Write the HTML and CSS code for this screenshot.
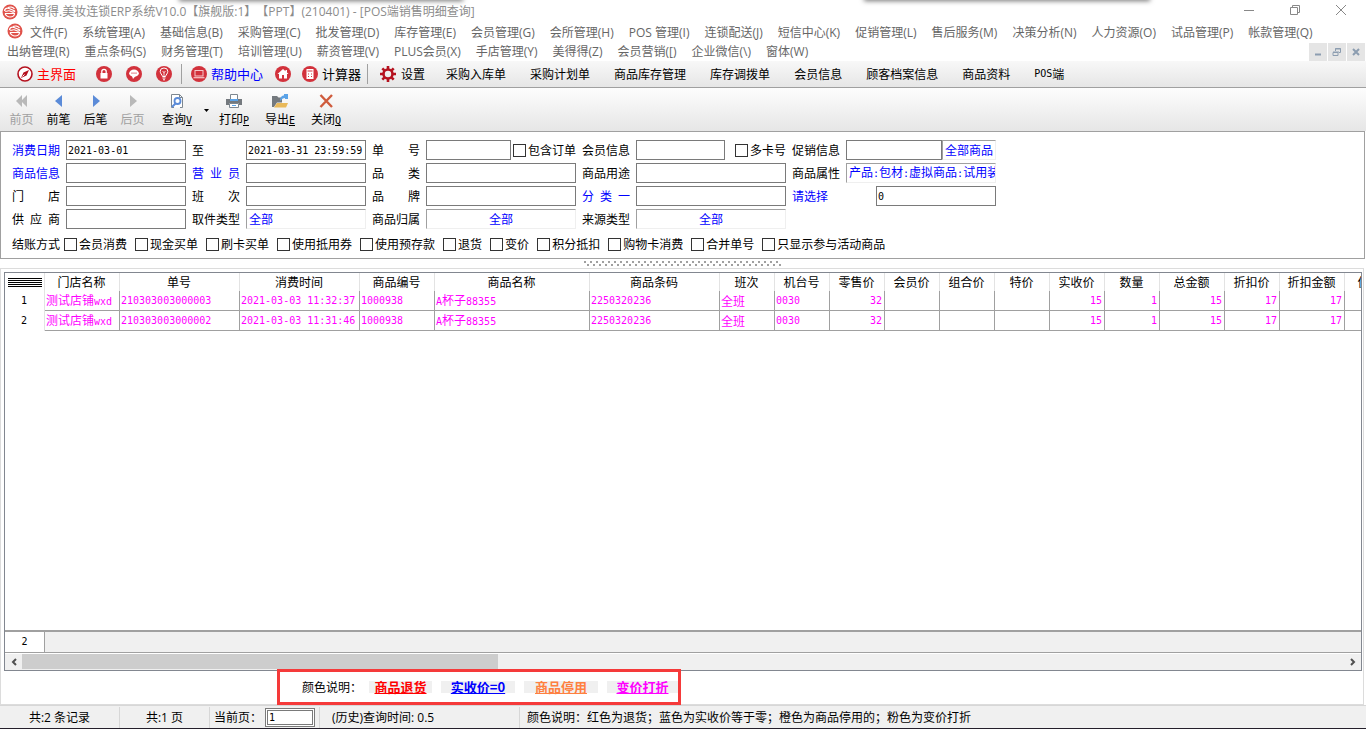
FILE: index.html
```html
<!DOCTYPE html>
<html lang="zh-CN">
<head>
    <meta charset="UTF-8">
    <meta name="viewport" content="width=device-width, initial-scale=1.0">
    <title>POS端销售明细查询</title>
    <link rel="stylesheet" href="styles.css">
</head>
<body>
    <svg class="defs" width="0" height="0">
        <symbol id="logo" viewBox="0 0 16 16">
            <circle cx="8" cy="8" r="7.5" fill="#e0524a"/>
            <path d="M2.500 7c0-2 2-3.500 4.500-2.500l6 2.500M3 7c2 1 3-1 5 0s4 2 5 0M3 9.500h9.500c0 2-2 3.500-4.500 3.500s-4-1.500-5-3.500M6 3.500c2-1 5-.5 6.500 1.500" fill="none" stroke="#fff" stroke-width="1.200"/>
        </symbol>
    </svg>
    <div class="topShadow shadowLeft"></div>
    <div class="topShadow shadowRight"></div>

    <header class="titleBar">
        <svg class="icon16"><use href="#logo"/></svg>
        <span class="titleText">美得得.美妆连锁ERP系统V10.0【旗舰版:1】【PPT】(210401) - [POS端销售明细查询]</span>
        <div class="windowButtons">
            <button type="button" aria-label="最小化"><svg width="12" height="12"><path d="M1 6.500h10" stroke="#888" fill="none"/></svg></button>
            <button type="button" aria-label="还原"><svg width="12" height="12"><path d="M1.500 3.500h7v7h-7zM3.500 3.500v-2h7v7h-2" stroke="#888" fill="none"/></svg></button>
            <button type="button" aria-label="关闭"><svg width="12" height="12"><path d="M1 1l10 10M11 1L1 11" stroke="#888" fill="none"/></svg></button>
        </div>
    </header>

    <div class="menuBar">
        <nav class="menu">
            <svg class="icon16 menuLogo"><use href="#logo"/></svg>
            <a href="#">文件(F)</a><a href="#">系统管理(A)</a><a href="#">基础信息(B)</a><a href="#">采购管理(C)</a><a href="#">批发管理(D)</a><a href="#">库存管理(E)</a><a href="#">会员管理(G)</a><a href="#">会所管理(H)</a><a href="#">POS 管理(I)</a><a href="#">连锁配送(J)</a><a href="#">短信中心(K)</a><a href="#">促销管理(L)</a><a href="#">售后服务(M)</a><a href="#">决策分析(N)</a><a href="#">人力资源(O)</a><a href="#">试品管理(P)</a><a href="#">帐款管理(Q)</a><a href="#">出纳管理(R)</a><a href="#">重点条码(S)</a><a href="#">财务管理(T)</a><a href="#">培训管理(U)</a><a href="#">薪资管理(V)</a><a href="#">PLUS会员(X)</a><a href="#">手店管理(Y)</a><a href="#">美得得(Z)</a><a href="#">会员营销([)</a><a href="#">企业微信(\)</a><a href="#">窗体(W)</a>
        </nav>
        <div class="mdiButtons">
            <button type="button" aria-label="最小化子窗口"><svg width="10" height="10"><path d="M2 7.500h6" stroke="#8c9db0" stroke-width="2"/></svg></button>
            <button type="button" aria-label="还原子窗口"><svg width="10" height="10"><path d="M1 5.500h5v3h-5zM1 5h6M3.500 4V1.500h5v4H7M3 2h6" stroke="#8c9db0" fill="none"/></svg></button>
            <button type="button" aria-label="关闭子窗口"><svg width="10" height="10"><path d="M2 2l6 6M8 2L2 8" stroke="#8c9db0" stroke-width="2"/></svg></button>
        </div>
    </div>

    <nav class="shortcuts">
        <a href="#" class="big red">
            <svg class="icon16" viewBox="0 0 16 16"><circle cx="8" cy="8" r="7" fill="#fff" stroke="#b5121f" stroke-width="1.600"/><path d="M12 4L9.500 9.500 4 12l2.500-5.500z" fill="#b5121f"/><path d="M7.500 8.500L5.500 10.500" stroke="#fff"/></svg>
            主界面
        </a>
        <div class="roundIcons">
            <a href="#" aria-label="锁定"><svg class="icon16" viewBox="0 0 16 16"><circle cx="8" cy="8" r="8" fill="#d2323c"/><rect x="4.500" y="7" width="7" height="5.500" fill="#fff"/><path d="M5.800 7V5.500a2.200 2.200 0 0 1 4.400 0V7" fill="none" stroke="#fff" stroke-width="1.300"/></svg></a>
            <a href="#" aria-label="消息"><svg class="icon16" viewBox="0 0 16 16"><circle cx="8" cy="8" r="8" fill="#d2323c"/><ellipse cx="8" cy="7.200" rx="4.800" ry="3.600" fill="#fff"/><path d="M6 10l1 3 2.500-3z" fill="#fff"/><path d="M5.500 7.200h1M7.500 7.200h1M9.500 7.200h1" stroke="#d2323c" stroke-width="1.200"/></svg></a>
            <a href="#" aria-label="提示"><svg class="icon16" viewBox="0 0 16 16"><circle cx="8" cy="8" r="8" fill="#d2323c"/><path d="M6.500 10.500C6 8.500 4.200 7.500 4.200 5.300a3.800 3.300 0 0 1 7.600 0C11.800 7.500 10 8.500 9.500 10.500z" fill="none" stroke="#fff"/><path d="M8 10V6M6.500 5L8 6.500 9.500 5" fill="none" stroke="#fff" stroke-width=".8"/><path d="M6.500 12h3M7 13.800h2" stroke="#fff"/></svg></a>
        </div>
        <i class="sep"></i>
        <a href="#" class="big blue help">
            <svg class="icon16" viewBox="0 0 16 16"><circle cx="8" cy="8" r="8" fill="#d2323c"/><rect x="4" y="4.500" width="8" height="5.500" fill="none" stroke="#f6c8ca"/><path d="M2.500 11.700h11" stroke="#f6c8ca" stroke-width="1.200"/></svg>
            帮助中心
        </a>
        <a href="#" aria-label="主页" class="home"><svg class="icon16" viewBox="0 0 16 16"><circle cx="8" cy="8" r="8" fill="#d2323c"/><path d="M8 3L2.500 8H4v4.500h3V9h2v3.500h3V8h1.500L12 6.500V4h-1.500v1.200z" fill="#fff"/></svg></a>
        <a href="#" class="big">
            <svg class="icon16" viewBox="0 0 16 16"><circle cx="8" cy="8" r="8" fill="#d2323c"/><rect x="4.500" y="3" width="7" height="10" fill="#fff"/><path d="M5.500 5h5" stroke="#d2323c"/><path d="M6 8h1M9 8h1M6 10.500h1M9 10.500h1" stroke="#d2323c" stroke-width="1.200"/></svg>
            计算器
        </a>
        <i class="sep"></i>
        <a href="#" class="setting">
            <svg class="icon16" viewBox="0 0 16 16"><circle cx="8" cy="8" r="4.500" fill="none" stroke="#b5121f" stroke-width="2.600"/><path d="M8 0v3M8 13v3M0 8h3M13 8h3M2.300 2.300l2 2M11.700 11.700l2 2M2.300 13.700l2-2M11.700 4.300l2-2" stroke="#b5121f" stroke-width="2.600"/></svg>
            设置
        </a>
        <div class="quickLinks">
            <a href="#">采购入库单</a>
            <a href="#">采购计划单</a>
            <a href="#">商品库存管理</a>
            <a href="#">库存调拨单</a>
            <a href="#">会员信息</a>
            <a href="#">顾客档案信息</a>
            <a href="#">商品资料</a>
            <a href="#"><span class="n">POS</span>端</a>
        </div>
    </nav>

    <div class="toolbar">
        <button type="button" disabled><svg class="icon16"><path d="M8 2v12L2 8zM13 2v12L7 8z" fill="#b9b9b9"/></svg>前页</button>
        <button type="button"><svg class="icon16"><path d="M11 2v12L4 8z" fill="#5b8bd8"/></svg>前笔</button>
        <button type="button"><svg class="icon16"><path d="M5 2v12l7-6z" fill="#5b8bd8"/></svg>后笔</button>
        <button type="button" disabled><svg class="icon16"><path d="M5 2v12l7-6z" fill="#b9b9b9"/></svg>后页</button>
        <button type="button" class="wide"><svg class="icon16"><path d="M5 14.500H2.500v-13h8l3 3v10H11M10.500 1.500v3h3" fill="#fff" stroke="#7d8790"/><circle cx="8.500" cy="8" r="3" fill="#fff" stroke="#5b8bd8" stroke-width="1.800"/><path d="M6.500 10.500L3 14" stroke="#5b8bd8" stroke-width="2"/></svg><span>查询<u class="n">V</u></span></button>
        <button type="button" class="drop" aria-label="查询选项"><svg width="5" height="3"><path d="M0 0h5L2.500 3z"/></svg></button>
        <button type="button" class="medium"><svg class="icon16"><path d="M4.500 6V1.500h7V6" fill="#fff" stroke="#7d8790"/><path d="M0 6h4v2h8V6h4v6h-3v-2H3v2H0z" fill="#74797e"/><path d="M4 6h8v2H4z" fill="#5ba3e8"/><path d="M3.500 10.500h9v4h-9z" fill="#fff" stroke="#7d8790"/><path d="M6 12.500h4" stroke="#5ba3e8"/></svg><span>打印<u class="n">P</u></span></button>
        <button type="button" class="medium"><svg class="icon16"><path d="M0 3h5l1.500 1.500H10v5H5L2 14H0z" fill="#74797e"/><path d="M2 14.500l3-4.500h11l-2 4.500z" fill="#e9b95a"/><path d="M8 8c0-4 2-5.500 4-5.500V1h4v5h-3V5c-2 0-3 1-5 3z" fill="#5ba3e8"/></svg><span>导出<u class="n">E</u></span></button>
        <button type="button" class="medium"><svg class="icon16"><path d="M2.500 2l11.500 12M14 2L2.500 14" stroke="#cf5b3c" stroke-width="2.400"/></svg><span>关闭<u class="n">Q</u></span></button>
    </div>

    <form class="filter">
        <div class="fields">
            <div class="field"><label class="blue" for="dateFrom">消费日期</label><input id="dateFrom" value="2021-03-01"></div>
            <div class="field"><label class="left" for="dateTo">至</label><input id="dateTo" value="2021-03-31 23:59:59"></div>
            <div class="field"><label for="billNo">单 号</label><input id="billNo"><div class="check"><input type="checkbox" id="withOrder"><label for="withOrder">包含订单</label></div></div>
            <div class="field"><label for="member">会员信息</label><input id="member"><div class="check multi"><input type="checkbox" id="multiCard"><label for="multiCard">多卡号</label></div></div>
            <div class="field"><label for="promo">促销信息</label><input id="promo"><button type="button" class="pick">全部商品</button></div>

            <div class="field"><label class="blue" for="goods">商品信息</label><input id="goods"></div>
            <div class="field"><label class="blue" for="clerk">营 业 员</label><input id="clerk"></div>
            <div class="field"><label for="kind">品 类</label><input id="kind"></div>
            <div class="field"><label for="usage">商品用途</label><input id="usage"></div>
            <div class="field"><label for="attr">商品属性</label><button type="button" id="attr" class="pick fill">产品<span class="n">:</span>包材<span class="n">:</span>虚拟商品<span class="n">:</span>试用装</button></div>

            <div class="field"><label for="shop">门 店</label><input id="shop"></div>
            <div class="field"><label for="shift">班 次</label><input id="shift"></div>
            <div class="field"><label for="brand">品 牌</label><input id="brand"></div>
            <div class="field"><label class="blue" for="cat1">分 类 一</label><input id="cat1"></div>
            <div class="field choose"><label class="blue left" for="choose">请选择</label><input id="choose" value="0"></div>

            <div class="field"><label for="supplier">供 应 商</label><input id="supplier"></div>
            <div class="field"><label for="pickup">取件类型</label><button type="button" id="pickup" class="pick fill">全部</button></div>
            <div class="field"><label for="owner">商品归属</label><button type="button" id="owner" class="pick fill center">全部</button></div>
            <div class="field"><label for="source">来源类型</label><button type="button" id="source" class="pick fill center">全部</button></div>
        </div>
        <div class="payRow">
            <span>结账方式</span>
            <div class="check"><input type="checkbox" id="p1"><label for="p1">会员消费</label></div>
            <div class="check"><input type="checkbox" id="p2"><label for="p2">现金买单</label></div>
            <div class="check"><input type="checkbox" id="p3"><label for="p3">刷卡买单</label></div>
            <div class="check"><input type="checkbox" id="p4"><label for="p4">使用抵用券</label></div>
            <div class="check"><input type="checkbox" id="p5"><label for="p5">使用预存款</label></div>
            <div class="check"><input type="checkbox" id="p6"><label for="p6">退货</label></div>
            <div class="check"><input type="checkbox" id="p7"><label for="p7">变价</label></div>
            <div class="check"><input type="checkbox" id="p8"><label for="p8">积分抵扣</label></div>
            <div class="check"><input type="checkbox" id="p9"><label for="p9">购物卡消费</label></div>
            <div class="check"><input type="checkbox" id="p10"><label for="p10">合并单号</label></div>
            <div class="check"><input type="checkbox" id="p11"><label for="p11">只显示参与活动商品</label></div>
        </div>
    </form>
    <div class="splitter"><i></i></div>

    <main class="frame">
        <div class="grid">
            <div class="gridBody">
                <table>
                    <colgroup>
                        <col class="w40"><col class="w75"><col class="w120"><col class="w120"><col class="w75"><col class="w155"><col class="w130">
                        <col class="w55"><col class="w55"><col class="w55"><col class="w55"><col class="w55"><col class="w55"><col class="w55"><col class="w55">
                        <col class="w65"><col class="w55"><col class="w65"><col class="w75">
                    </colgroup>
                    <thead>
                        <tr>
                            <th><div class="lines"></div></th><th>门店名称</th><th>单号</th><th>消费时间</th><th>商品编号</th><th>商品名称</th><th>商品条码</th><th>班次</th><th>机台号</th><th>零售价</th><th>会员价</th><th>组合价</th><th>特价</th><th>实收价</th><th>数量</th><th>总金额</th><th>折扣价</th><th>折扣金额</th><th>优惠金额</th>
                        </tr>
                    </thead>
                    <tbody>
                        <tr>
                            <th class="n">1</th><td>测试店铺<span class="n">wxd</span></td><td class="n">210303003000003</td><td class="n">2021-03-03 11:32:37</td><td class="n">1000938</td><td><span class="n">A</span>杯子<span class="n">88355</span></td><td class="n">2250320236</td><td>全班</td><td class="n">0030</td><td class="n num">32</td><td></td><td></td><td></td><td class="n num">15</td><td class="n num">1</td><td class="n num">15</td><td class="n num">17</td><td class="n num">17</td><td></td>
                        </tr>
                        <tr>
                            <th class="n">2</th><td>测试店铺<span class="n">wxd</span></td><td class="n">210303003000002</td><td class="n">2021-03-03 11:31:46</td><td class="n">1000938</td><td><span class="n">A</span>杯子<span class="n">88355</span></td><td class="n">2250320236</td><td>全班</td><td class="n">0030</td><td class="n num">32</td><td></td><td></td><td></td><td class="n num">15</td><td class="n num">1</td><td class="n num">15</td><td class="n num">17</td><td class="n num">17</td><td></td>
                        </tr>
                    </tbody>
                </table>
            </div>
            <div class="totalRow"><span class="n">2</span></div>
            <div class="scrollBar">
                <button type="button" aria-label="向左"><svg width="8" height="8"><path d="M6 1L3 4l3 3" fill="none" stroke="#505050" stroke-width="2"/></svg></button>
                <div class="track"><div class="thumb"></div></div>
                <button type="button" aria-label="向右"><svg width="8" height="8"><path d="M2 1l3 3-3 3" fill="none" stroke="#505050" stroke-width="2"/></svg></button>
            </div>
        </div>
        <div class="legend">
            <span class="legendTitle">颜色说明：</span>
            <a href="#" class="tag tagRed">商品退货</a>
            <a href="#" class="tag tagBlue">实收价=0</a>
            <a href="#" class="tag tagOrange">商品停用</a>
            <a href="#" class="tag tagPink">变价打折</a>
        </div>
    </main>

    <footer class="status">
        <div class="cell records">共:2 条记录</div>
        <div class="cell pages">共:1 页</div>
        <div class="cell current"><label for="page">当前页：</label><input id="page" value="1"></div>
        <div class="cell time">(历史)查询时间: 0.5</div>
        <div class="cell note">颜色说明：红色为退货；蓝色为实收价等于零；橙色为商品停用的；粉色为变价打折</div>
    </footer>
</body>
</html>
```
FILE: styles.css
```css
* {
    box-sizing: border-box;
}
html, body {
    margin: 0;
    padding: 0;
}
body {
    font-family: "Open Sans", "Noto Sans CJK SC", sans-serif;
    font-size: 12px;
    line-height: 16px;
    text-spacing-trim: space-all;
    height: 100vh;
    display: flex;
    flex-direction: column;
    background-color: #fff;
    color: #000;
    overflow: hidden;
    border-bottom: 1px solid #241f2b;
}
a {
    color: inherit;
    text-decoration: none;
}
button, input {
    font: inherit;
    color: inherit;
    margin: 0;
    padding: 0;
    border: 0;
    border-radius: 0;
    background: none;
}
.defs {
    position: absolute;
}
.icon16 {
    width: 16px;
    height: 16px;
    flex: none;
    display: block;
}
.blue {
    color: #0000ff;
}
.red {
    color: #ff0000;
}
/* half-width latin next to 12px chinese */
.n {
    font-family: "DejaVu Sans Mono", monospace;
    font-size: 10px;
}

/* shadows of the panels docked above the window */
.topShadow {
    position: absolute;
    top: -4px;
    height: 4px;
    box-shadow: 0 0 5px 1px #777;
}
.shadowLeft {
    left: 13.2%;
    width: 20.6%;
}
.shadowRight {
    left: 63.3%;
    width: 20.8%;
}

.titleBar {
    display: flex;
    align-items: center;
    height: 23px;
    padding: 0 2px;
    gap: 5px;
    color: #8c8c8c;
    flex: none;
}
.titleText {
    flex: 1;
    white-space: nowrap;
}
.windowButtons {
    display: flex;
    align-self: flex-start;
}
.windowButtons button {
    width: 46px;
    height: 20px;
    display: flex;
    align-items: center;
    justify-content: center;
}

.menuBar {
    display: flex;
    position: relative;
    flex: none;
    color: #666;
}
.menu {
    flex: 1;
    display: flex;
    flex-wrap: wrap;
}
.menu a {
    padding: 0 8px 0 7px;
    line-height: 19px;
    white-space: nowrap;
}
.menuLogo {
    margin-left: 7px;
}
.mdiButtons {
    position: absolute;
    right: 1px;
    bottom: 0;
    display: flex;
    gap: 1px;
}
.mdiButtons button {
    width: 18px;
    height: 18px;
    background-color: #e5e5e5;
    display: flex;
    align-items: center;
    justify-content: center;
}

.shortcuts {
    flex: none;
    display: flex;
    align-items: center;
    height: 27px;
    padding-left: 17px;
    background: linear-gradient(#f8f8f8, #e6e6e6);
    border-bottom: 1px solid #a0a0a0;
    white-space: nowrap;
    font-family: "Noto Sans CJK SC", sans-serif;
}
.shortcuts a {
    display: flex;
    align-items: center;
    gap: 4px;
}
.shortcuts .big {
    font-size: 13px;
}
.roundIcons {
    display: flex;
    gap: 14px;
    margin: 0 9px 0 20px;
}
.sep {
    width: 1px;
    height: 20px;
    background-color: #a0a0a0;
}
.shortcuts .help {
    margin-left: 9px;
}
.shortcuts .home {
    margin: 0 11px 0 12px;
}
.shortcuts .home + .big {
    margin-right: 6px;
}
.shortcuts .setting {
    margin: 0 21px 0 12px;
    gap: 5px;
}
.quickLinks {
    display: flex;
    gap: 24px;
}
.quickLinks a {
    gap: 0;
}

.toolbar {
    flex: none;
    display: flex;
    height: 43px;
    padding: 5px 0 0 3px;
    background: linear-gradient(#fdfdfd, #e6e6e6);
    font-family: "Noto Sans CJK SC", sans-serif;
}
.toolbar button {
    width: 37px;
    height: 35px;
    display: flex;
    flex-direction: column;
    align-items: center;
    gap: 2px;
}
.toolbar button:disabled {
    color: #a0a0a0;
}
.toolbar .wide {
    width: 52px;
}
.toolbar .drop {
    width: 6px;
    margin-right: 2px;
    justify-content: center;
}
.toolbar .medium {
    width: 46px;
}

.filter {
    flex: none;
    border: 1px solid #a0a0a0;
    padding: 8px 0 6px 11px;
    margin-right: 1px;
    font-family: "Noto Sans CJK SC", sans-serif;
}
.fields {
    display: grid;
    grid-template-columns: 174px 174px 204px 204px 204px;
    grid-auto-rows: 20px;
    gap: 3px 6px;
}
.field {
    display: flex;
    align-items: center;
    min-width: 0;
}
.field > label {
    width: 48px;
    margin-right: 6px;
    flex: none;
    text-align-last: justify;
    white-space: nowrap;
}
.field > .left {
    text-align-last: left;
}
.field > input {
    flex: 1;
    min-width: 0;
    height: 20px;
    border: 1px solid #7a7a7a;
    background-color: #fff;
    padding: 0 1px;
    font-family: "DejaVu Sans Mono", monospace;
    font-size: 10px;
}
.choose > input {
    margin-left: 30px;
}
.check {
    display: flex;
    align-items: center;
    gap: 2px;
    white-space: nowrap;
}
.check input {
    appearance: none;
    width: 13px;
    height: 13px;
    border: 1px solid #333;
    background-color: #fff;
}
.field .check {
    margin-left: 2px;
}
.field .multi {
    margin-left: 10px;
}
.pick {
    height: 20px;
    border: 1px solid #efefef;
    border-top-color: #a0a0a0;
    border-left-color: #a0a0a0;
    color: #0000ff;
    padding: 0 2px;
    overflow: hidden;
    white-space: nowrap;
    text-align: left;
}
.pick.fill {
    flex: 1;
    min-width: 0;
}
.pick.center {
    text-align: center;
}
.payRow {
    display: flex;
    align-items: center;
    gap: 8px;
    margin-top: 7px;
}
.payRow > span {
    margin-right: -4px;
}

.splitter {
    flex: none;
    height: 9px;
    display: flex;
    justify-content: center;
    align-items: center;
}
.splitter i {
    width: 198px;
    height: 5px;
    background-image:
        conic-gradient(from 0deg at 2px 2px, transparent 75%, #a0a0a0 0),
        conic-gradient(from 0deg at 2px 2px, transparent 75%, #a0a0a0 0);
    background-size: 6px 6px;
    background-position: 0 0, 3px 3px;
}

.frame {
    flex: 1;
    min-height: 0;
    display: flex;
    flex-direction: column;
    margin-right: 2px;
    border: 1px solid #dcdcdc;
    padding: 3px 1px 0 3px;
    font-family: "Noto Sans CJK SC", sans-serif;
}
.grid {
    flex: 1;
    min-height: 0;
    display: flex;
    flex-direction: column;
    border: 1px solid #828790;
}
.gridBody {
    flex: 1;
    overflow: hidden;
}
table {
    table-layout: fixed;
    width: 1415px;
    border-collapse: separate;
    border-spacing: 0;
}
th, td {
    padding: 0 2px 0 1px;
    font-weight: normal;
    white-space: nowrap;
    overflow: hidden;
    line-height: 16px;
}
thead th {
    height: 18px;
    border-right: 1px solid #e3e3e3;
}
tbody th {
    height: 20px;
    border-right: 1px solid #e3e3e3;
}
tbody td {
    height: 20px;
    color: #ff00ff;
    border-right: 1px solid #a0a0a0;
    border-bottom: 1px solid #a0a0a0;
}
.num {
    text-align: right;
}
.lines {
    height: 9px;
    margin-left: 2px;
    background: repeating-linear-gradient(#000 0, #000 1px, #fff 1px, #fff 2px);
}
.w40 { width: 40px; }
.w55 { width: 55px; }
.w65 { width: 65px; }
.w75 { width: 75px; }
.w120 { width: 120px; }
.w130 { width: 130px; }
.w155 { width: 155px; }

.totalRow {
    height: 23px;
    border-top: 2px solid #a0a0a0;
    border-bottom: 1px solid #a0a0a0;
    background-color: #f0f0f0;
    display: flex;
}
.totalRow span {
    width: 40px;
    line-height: 19px;
    text-align: center;
    background-color: #fff;
    border-right: 1px solid #a0a0a0;
}
.scrollBar {
    height: 17px;
    border-top: 1px solid #fff;
    background-color: #f0f0f0;
    display: flex;
}
.scrollBar button {
    width: 17px;
    display: flex;
    align-items: center;
    justify-content: center;
}
.track {
    flex: 1;
}
.thumb {
    width: 36%;
    height: 15px;
    background-color: #cdcdcd;
}

.legend {
    position: relative;
    align-self: flex-start;
    display: flex;
    align-items: center;
    gap: 9px;
    height: 36px;
    margin: -2px 0 -1px 273px;
    padding-left: 22px;
    border: 3px solid #f53a3a;
    white-space: nowrap;
}
.legendTitle {
    width: 58px;
}
.tag {
    height: 12px;
    line-height: 12px;
    width: 74px;
    text-align: center;
    background-color: #f0f0f0;
    font-size: 13px;
    font-weight: bold;
    text-decoration: underline;
}
.tagRed {
    color: #ff0000;
    width: 63px;
}
.tagBlue {
    color: #0000ff;
}
.tagOrange {
    color: #ff8040;
}
.tagPink {
    color: #ff00ff;
    width: 71px;
}

.status {
    flex: none;
    display: flex;
    height: 23px;
    padding: 1px 0 0;
    background-color: #f0f0f0;
    border-top: 1px solid #d7d7d7;
    white-space: nowrap;
}
.cell {
    display: flex;
    align-items: center;
    border-right: 1px solid #d7d7d7;
}
.records {
    width: 120px;
    justify-content: center;
}
.pages {
    width: 90px;
    justify-content: center;
}
.current {
    width: 110px;
    padding-left: 4px;
}
.current label {
    width: 51px;
}
.current input {
    width: 50px;
    height: 19px;
    border: 3px double #7a7a7a;
    background-color: #fff;
    padding: 0 1px;
    font-family: "DejaVu Sans Mono", monospace;
    font-size: 10px;
}
.time {
    width: 200px;
    padding-left: 12px;
}
.note {
    flex: 1;
    padding-left: 7px;
    border-right: 0;
}
```
